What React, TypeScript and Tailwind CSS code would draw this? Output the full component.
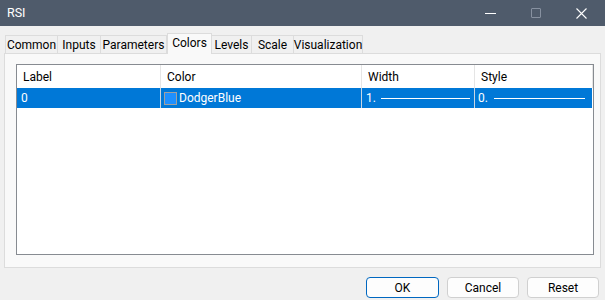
const tabs = [
  { name: "Common", w: 53 },
  { name: "Inputs", w: 43 },
  { name: "Parameters", w: 66 },
  { name: "Colors", w: 45, active: true },
  { name: "Levels", w: 40 },
  { name: "Scale", w: 42 },
  { name: "Visualization", w: 69 },
];

const cols = [
  { name: "Label", w: 144 },
  { name: "Color", w: 201 },
  { name: "Width", w: 113 },
  { name: "Style", w: 118 },
];

function Line({ w }: { w: number }) {
  return <div className="h-px bg-white" style={{ width: w }} />;
}

export default function App() {
  return (
    <div
      className="w-[605px] h-[300px] bg-[#f0f0f0] flex flex-col text-[12px] text-black overflow-hidden"
      style={{ fontFamily: 'Roboto, "Noto Sans", sans-serif' }}
    >
      {/* Title bar */}
      <div className="h-[26px] shrink-0 bg-[#4f5b6b] flex items-center pl-[7px] text-white text-[12.5px]">
        <span className="flex-1">RSI</span>
        <div className="flex items-center h-full">
          <div className="w-[46px] flex justify-center">
            <div className="w-[11px] h-px bg-white" />
          </div>
          <div className="w-[46px] flex justify-center">
            <div className="w-[10px] h-[10px] border border-[#8791a0] rounded-[1px]" />
          </div>
          <div className="w-[46px] flex justify-center pr-[2px]">
            <svg width="11" height="11" viewBox="0 0 11 11">
              <path d="M0.5 0.5 L10.5 10.5 M10.5 0.5 L0.5 10.5" stroke="white" strokeWidth="1.1" />
            </svg>
          </div>
        </div>
      </div>

      {/* Tabs */}
      <div className="pt-[7px] px-[4px]">
        <div className="flex items-end h-[20px] pl-[1px] relative z-10">
          {tabs.map((t) =>
            t.active ? (
              <div
                key={t.name}
                className="h-[21px] mb-[-1px] bg-[#f9f9f9] border border-b-0 border-[#dcdcdc] flex items-center justify-center pb-[2px]"
                style={{ width: t.w }}
              >
                {t.name}
              </div>
            ) : (
              <div
                key={t.name}
                className="h-[18px] bg-[#f0f0f0] border border-b-0 border-l-0 first:border-l border-[#dcdcdc] flex items-center justify-center"
                style={{ width: t.w }}
              >
                {t.name}
              </div>
            )
          )}
        </div>

        {/* Panel */}
        <div className="h-[215px] bg-[#f9f9f9] border border-[#dcdcdc] pt-[10px] pl-[11px]">
          <div className="w-[578px] h-[191px] bg-white border border-[#878b91] flex flex-col">
            <div className="flex h-[23px]">
              {cols.map((c) => (
                <div
                  key={c.name}
                  className="flex items-center pl-[6px] border-r border-[#e5e5e5]"
                  style={{ width: c.w }}
                >
                  {c.name}
                </div>
              ))}
            </div>
            <div className="flex h-[20px] bg-[#0078d7] text-white w-[575px]">
              <div className="w-[144px] border-r border-[#c9d6e3] flex items-center pl-[4px]">0</div>
              <div className="w-[201px] border-r border-[#c9d6e3] flex items-center pl-[3px] gap-[2px]">
                <div className="w-[13px] h-[13px] bg-[#1e90ff] border border-[#a0a0a0]" />
                <span>DodgerBlue</span>
              </div>
              <div className="w-[113px] border-r border-[#c9d6e3] flex items-center pl-[4px] gap-[5px]">
                <span>1.</span>
                <Line w={89} />
              </div>
              <div className="w-[117px] flex items-center pl-[3px] gap-[6px]">
                <span>0.</span>
                <Line w={91} />
              </div>
            </div>
          </div>
        </div>
      </div>

      {/* Buttons */}
      <div className="flex justify-end gap-[8px] pr-[6px] pt-[9px]">
        <button className="w-[73px] h-[21px] bg-[#fdfdfd] border border-[#0067c0] rounded-[4px] flex items-center justify-center">
          OK
        </button>
        <button className="w-[72px] h-[21px] bg-[#fdfdfd] border border-[#d0d0d0] rounded-[4px] flex items-center justify-center">
          Cancel
        </button>
        <button className="w-[72px] h-[21px] bg-[#fdfdfd] border border-[#d0d0d0] rounded-[4px] flex items-center justify-center">
          Reset
        </button>
      </div>
    </div>
  );
}
